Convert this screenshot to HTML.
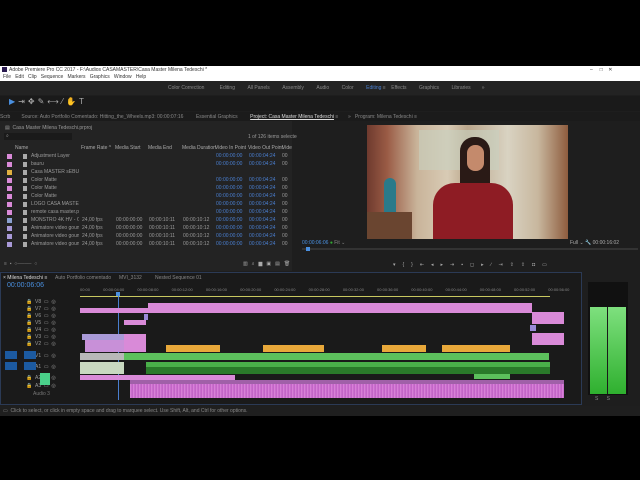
<!DOCTYPE html><html><head><style>
*{margin:0;padding:0;box-sizing:border-box}
body{width:640px;height:480px;background:#000;position:relative;overflow:hidden;font-family:"Liberation Sans",sans-serif;font-size:5px;color:#9a9a9a}
.a{position:absolute;white-space:nowrap}
.b{color:#4a7fd0}
</style></head><body>
<div class="a" style="left:0;top:66px;width:640px;height:15px;background:#fff"></div>
<div class="a" style="left:2px;top:67px;width:5px;height:5px;background:#2a1a50"></div>
<div class="a" style="left:9px;top:67px;color:#333">Adobe Premiere Pro CC 2017 - F:\Audios CASAMASTER\Casa Master Milena Tedeschi *</div>
<div class="a" style="left:3px;top:74px;color:#333">File&nbsp;&nbsp; Edit&nbsp;&nbsp; Clip&nbsp;&nbsp; Sequence&nbsp;&nbsp; Markers&nbsp;&nbsp; Graphics&nbsp;&nbsp; Window&nbsp;&nbsp; Help</div>
<div class="a" style="left:590px;top:67px;color:#333">–&nbsp;&nbsp;&nbsp;&nbsp;&nbsp;□&nbsp;&nbsp;&nbsp;&nbsp;✕</div>
<div class="a" style="left:0;top:81px;width:640px;height:335px;background:#1e1e1e"></div>
<div class="a" style="left:0;top:81px;width:640px;height:14px;background:#232323"></div>
<div class="a" style="left:168px;top:85px;color:#8a8a8a">Color Correction&nbsp;&nbsp;&nbsp;&nbsp;&nbsp;&nbsp;&nbsp;&nbsp;&nbsp;&nbsp;&nbsp;Editing&nbsp;&nbsp;&nbsp;&nbsp;&nbsp;&nbsp;&nbsp;&nbsp;&nbsp;All Panels&nbsp;&nbsp;&nbsp;&nbsp;&nbsp;&nbsp;&nbsp;&nbsp;&nbsp;Assembly&nbsp;&nbsp;&nbsp;&nbsp;&nbsp;&nbsp;&nbsp;&nbsp;&nbsp;Audio&nbsp;&nbsp;&nbsp;&nbsp;&nbsp;&nbsp;&nbsp;&nbsp;&nbsp;Color&nbsp;&nbsp;&nbsp;&nbsp;&nbsp;&nbsp;&nbsp;&nbsp;&nbsp;<span class="b">Editing</span> ≡&nbsp;&nbsp;&nbsp;&nbsp;Effects&nbsp;&nbsp;&nbsp;&nbsp;&nbsp;&nbsp;&nbsp;&nbsp;&nbsp;Graphics&nbsp;&nbsp;&nbsp;&nbsp;&nbsp;&nbsp;&nbsp;&nbsp;&nbsp;Libraries&nbsp;&nbsp;&nbsp;&nbsp;&nbsp;&nbsp;&nbsp;&nbsp;»</div>
<div class="a" style="left:0;top:96px;width:640px;height:15px;background:#1a1a1a"></div>
<div class="a" style="left:9px;top:97px;font-size:8px;color:#aaa;letter-spacing:3px"><span style="color:#4a90e0">▶</span>⇥✥✎⟷⁄✋T</div>
<div class="a" style="left:0;top:112px;width:640px;height:9px;background:#1b1b1b"></div>
<div class="a" style="left:0;top:114px;color:#888">Scrb&nbsp;&nbsp;&nbsp;&nbsp;&nbsp;&nbsp;&nbsp;&nbsp;Source: Auto Portfolio Comentado: Hitting_the_Wheels.mp3: 00:00:07:16&nbsp;&nbsp;&nbsp;&nbsp;&nbsp;&nbsp;&nbsp;&nbsp;&nbsp;Essential Graphics&nbsp;&nbsp;&nbsp;&nbsp;&nbsp;&nbsp;&nbsp;&nbsp;&nbsp;<span style="color:#ddd;text-decoration:underline">Project: Casa Master Milena Tedeschi</span> ≡&nbsp;&nbsp;&nbsp;&nbsp;&nbsp;&nbsp;&nbsp;»&nbsp;&nbsp;&nbsp;Program: Milena Tedeschi ≡</div>
<div class="a" style="left:0;top:121px;width:292px;height:150px;background:#232323"></div>
<div class="a" style="left:5px;top:125px">▤&nbsp;&nbsp;Casa Master Milena Tedeschi.prproj</div>
<div class="a" style="left:4px;top:133px;width:68px;height:7px;background:#1a1a1a"></div>
<div class="a" style="left:6px;top:133px">⌕</div>
<div class="a" style="left:248px;top:134px">1 of 126 items selected</div>
<div class="a" style="left:15px;top:145px;color:#aaa">Name<span style="position:absolute;left:66px">Frame Rate ^</span><span style="position:absolute;left:100px">Media Start</span><span style="position:absolute;left:133px">Media End</span><span style="position:absolute;left:167px">Media Duration</span><span style="position:absolute;left:200px">Video In Point</span><span style="position:absolute;left:233px">Video Out Point</span><span style="position:absolute;left:267px">Vide</span></div>
<div id="rows"></div>
<div class="a" style="left:4px;top:261px;color:#888">≡&nbsp;&nbsp;▪&nbsp;&nbsp;○────&nbsp;&nbsp;○</div>
<div class="a" style="left:243px;top:261px;color:#aaa;letter-spacing:4px">▥⌕▆▣▤🗑</div>
<div class="a" style="left:297px;top:121px;width:343px;height:150px;background:#1e1e1e"></div>
<div class="a" style="left:367px;top:125px;width:201px;height:114px;overflow:hidden;background:linear-gradient(90deg,#6e3a2e 0,#9a5b45 10%,#c9b49a 25%,#d8cbb5 40%,#bba78c 50%,#d9d3c2 70%,#c8b79e 85%,#8e5c3e 100%)">
<div class="a" style="left:52px;top:5px;width:80px;height:40px;background:#c8d0c0;opacity:.6"></div>
<div class="a" style="left:17px;top:53px;width:12px;height:40px;background:#2a7a8a;border-radius:6px 6px 2px 2px"></div>
<div class="a" style="left:0;top:87px;width:45px;height:27px;background:#6a4530"></div>
<div class="a" style="left:93px;top:12px;width:30px;height:75px;background:#2a1a16;border-radius:14px 14px 4px 4px"></div>
<div class="a" style="left:100px;top:20px;width:17px;height:26px;background:#c48a6c;border-radius:8px"></div>
<div class="a" style="left:66px;top:58px;width:80px;height:56px;background:#8e1c24;border-radius:22px 22px 0 0"></div>
</div>
<div class="a" style="left:302px;top:240px;color:#4a90e0">00:00:06:06 <span style="color:#3a3">●</span> <span style="color:#888">Fit ⌄</span></div>
<div class="a" style="left:570px;top:240px;color:#aaa">Full ⌄ 🔧 00:00:16:02</div>
<div class="a" style="left:302px;top:248px;width:336px;height:2px;background:#333"></div>
<div class="a" style="left:306px;top:247px;width:4px;height:4px;background:#4a90e0"></div>
<div class="a" style="left:393px;top:262px;color:#aaa;letter-spacing:7px">▾{}⇤◂▸⇥▪◻▸∕⇥⇪⇪◘▭</div>
<div class="a" style="left:0;top:272px;width:582px;height:133px;background:#1a1a1a;border:1px solid #2b3a55"></div>
<div class="a" style="left:3px;top:275px;color:#ddd">× Milena Tedeschi ≡<span style="position:absolute;left:52px;color:#888">Auto Portfolio comentado</span><span style="position:absolute;left:116px;color:#888">MVI_3132</span><span style="position:absolute;left:152px;color:#888">Nested Sequence 01</span></div>
<div class="a" style="left:7px;top:282px;color:#4a90e0;font-size:7px">00:00:06:06</div>
<div class="a" style="left:80px;top:287px;width:496px;overflow:hidden;color:#888;font-size:4px;word-spacing:12px">00:00 00:00:04:00 00:00:08:00 00:00:12:00 00:00:16:00 00:00:20:00 00:00:24:00 00:00:28:00 00:00:32:00 00:00:36:00 00:00:40:00 00:00:44:00 00:00:48:00 00:00:52:00 00:00:56:00 00:01:00:00 00:01:04:00 00:01:08:00 00:01:12:00</div>
<div class="a" style="left:80px;top:296px;width:470px;height:1px;background:#c8c860"></div>
<div class="a" style="left:118px;top:292px;width:1px;height:108px;background:#4a7fd0"></div>
<div class="a" style="left:116px;top:292px;width:4px;height:4px;background:#4a90e0"></div>
<div id="tr"></div>
<div class="a" style="left:148px;top:303px;width:384px;height:6px;background:#d98ad8"></div>
<div class="a" style="left:80px;top:308px;width:452px;height:5px;background:#d98ad8"></div>
<div class="a" style="left:144px;top:314px;width:4px;height:6px;background:#9a8ad8"></div>
<div class="a" style="left:124px;top:320px;width:22px;height:5px;background:#d98ad8"></div>
<div class="a" style="left:82px;top:334px;width:42px;height:6px;background:#a99ad8"></div>
<div class="a" style="left:124px;top:334px;width:22px;height:6px;background:#d98ad8"></div>
<div class="a" style="left:532px;top:312px;width:32px;height:12px;background:#d98ad8"></div>
<div class="a" style="left:530px;top:325px;width:6px;height:6px;background:#9a8ad8"></div>
<div class="a" style="left:532px;top:333px;width:32px;height:12px;background:#d98ad8"></div>
<div class="a" style="left:85px;top:340px;width:40px;height:12px;background:#c890d8"></div>
<div class="a" style="left:124px;top:340px;width:22px;height:12px;background:#d98ad8"></div>
<div class="a" style="left:166px;top:345px;width:54px;height:7px;background:#e8a83a"></div>
<div class="a" style="left:263px;top:345px;width:61px;height:7px;background:#e8a83a"></div>
<div class="a" style="left:382px;top:345px;width:44px;height:7px;background:#e8a83a"></div>
<div class="a" style="left:442px;top:345px;width:68px;height:7px;background:#e8a83a"></div>
<div class="a" style="left:80px;top:353px;width:44px;height:7px;background:#b8b8b8"></div>
<div class="a" style="left:124px;top:353px;width:425px;height:7px;background:#5cc05c"></div>
<div class="a" style="left:80px;top:362px;width:44px;height:12px;background:#c8d8c0"></div>
<div class="a" style="left:146px;top:362px;width:404px;height:5px;background:#4ab04a"></div>
<div class="a" style="left:146px;top:367px;width:404px;height:7px;background:#2a7a2a"></div>
<div class="a" style="left:80px;top:375px;width:155px;height:5px;background:#d98ad8"></div>
<div class="a" style="left:474px;top:374px;width:36px;height:5px;background:#5cc05c"></div>
<div class="a" style="left:130px;top:380px;width:434px;height:18px;background:repeating-linear-gradient(90deg,#d070d0 0,#e090e0 1px,#b050b8 2px,#d878d8 3px)"></div>
<div class="a" style="left:130px;top:380px;width:434px;height:4px;background:#a060a8"></div>
<div class="a" style="left:588px;top:282px;width:40px;height:113px;background:#111"></div>
<div class="a" style="left:590px;top:307px;width:36px;height:87px;background:linear-gradient(#7ee07e,#2fb02f)"></div>
<div class="a" style="left:607px;top:307px;width:1px;height:87px;background:#1a1a1a"></div>
<div class="a" style="left:595px;top:396px;color:#888">S&nbsp;&nbsp;&nbsp;&nbsp;&nbsp;&nbsp;S</div>
<div class="a" style="left:0;top:406px;width:640px;height:10px;background:#1f1f1f"></div>
<div class="a" style="left:3px;top:408px;color:#888">▭&nbsp;&nbsp;Click to select, or click in empty space and drag to marquee select. Use Shift, Alt, and Ctrl for other options.</div>
<script>
var names=["Adjustment Layer","bauru","Casa MASTER sEBUESTA","Color Matte","Color Matte","Color Matte","LOGO CASA MASTER BRAN","remote casa master.png","MONSTRO 4K HV - Official","Animatore video goumaum","Animatore video goumaum","Animatore video goumaum","CASAMASTER LOGO.mov"];
var cols=["#d98ad8","#d98ad8","#e0b040","#d98ad8","#d98ad8","#d98ad8","#d98ad8","#d98ad8","#8aa0d0","#a99ad8","#a99ad8","#a99ad8","#a99ad8"];
var h="";
for(var i=0;i<12;i++){var y=153+i*8;
h+='<div class="a" style="left:7px;top:'+(y+1)+'px;width:5px;height:5px;background:'+cols[i]+'"></div>';
h+='<div class="a" style="left:23px;top:'+(y+1)+'px;width:4px;height:5px;background:#aaa"></div>';
h+='<div class="a" style="left:31px;top:'+y+'px;width:48px;overflow:hidden">'+names[i]+'</div>';
if(i!=2){h+='<div class="a b" style="left:216px;top:'+y+'px">00:00:00:00</div><div class="a b" style="left:249px;top:'+y+'px">00:00:04:24</div><div class="a" style="left:282px;top:'+y+'px">00</div>';}
if(i>=8){h+='<div class="a" style="left:82px;top:'+y+'px">24,00 fps</div><div class="a" style="left:116px;top:'+y+'px">00:00:00:00</div><div class="a" style="left:149px;top:'+y+'px">00:00:10:11</div><div class="a" style="left:183px;top:'+y+'px">00:00:10:12</div>';}
}
document.getElementById("rows").innerHTML=h;
var t=["V8","V7","V6","V5","V4","V3","V2","V1","A1","A2","A3"],ty=[299,306,313,320,327,334,341,353,364,375,383],g="";
for(var i=0;i<t.length;i++){g+='<div class="a" style="left:26px;top:'+ty[i]+'px">🔒 &nbsp;'+t[i]+' &nbsp;▭ &nbsp;◎</div>';}
g+='<div class="a" style="left:5px;top:351px;width:12px;height:8px;background:#1c5aa0"></div><div class="a" style="left:5px;top:362px;width:12px;height:8px;background:#1c5aa0"></div><div class="a" style="left:24px;top:351px;width:12px;height:8px;background:#1c5aa0"></div><div class="a" style="left:24px;top:362px;width:12px;height:8px;background:#1c5aa0"></div><div class="a" style="left:40px;top:373px;width:10px;height:12px;background:#4ad08a"></div><div class="a" style="left:33px;top:391px;color:#777">Audio 3</div>';
document.getElementById("tr").innerHTML=g;
</script>
</body></html>
